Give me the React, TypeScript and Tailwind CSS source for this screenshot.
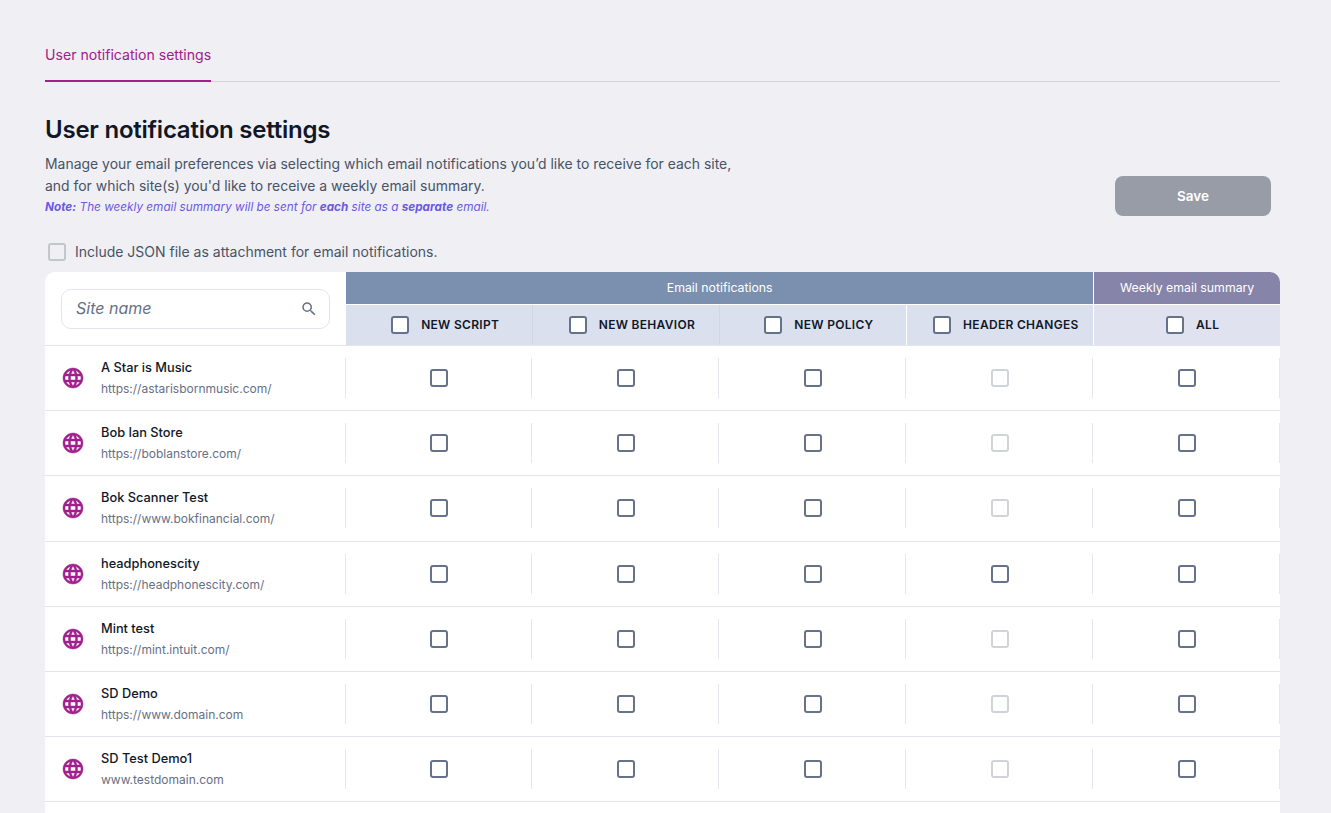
import { MdSearch } from 'react-icons/md';

const sites = [
  { name: 'A Star is Music', url: 'https://astarisbornmusic.com/', header: false },
  { name: 'Bob Ian Store', url: 'https://boblanstore.com/', header: false },
  { name: 'Bok Scanner Test', url: 'https://www.bokfinancial.com/', header: false },
  { name: 'headphonescity', url: 'https://headphonescity.com/', header: true },
  { name: 'Mint test', url: 'https://mint.intuit.com/', header: false },
  { name: 'SD Demo', url: 'https://www.domain.com', header: false },
  { name: 'SD Test Demo1', url: 'www.testdomain.com', header: false },
];

const columns = ['NEW SCRIPT', 'NEW BEHAVIOR', 'NEW POLICY', 'HEADER CHANGES'];

function Globe() {
  return (
    <svg viewBox="0 0 24 24" width="24" height="24" className="shrink-0" fill="#a0208c" stroke="#a0208c" strokeWidth="0.45">
      <path d="M11.99 2C6.47 2 2 6.48 2 12s4.47 10 9.99 10C17.52 22 22 17.52 22 12S17.52 2 11.99 2zm6.93 6h-2.95c-.32-1.25-.78-2.45-1.38-3.56 1.84.63 3.37 1.91 4.33 3.56zM12 4.04c.83 1.2 1.48 2.53 1.91 3.96h-3.82c.43-1.43 1.08-2.76 1.91-3.96zM4.26 14C4.1 13.36 4 12.69 4 12s.1-1.36.26-2h3.38c-.08.66-.14 1.32-.14 2 0 .68.06 1.34.14 2H4.26zm.82 2h2.95c.32 1.25.78 2.45 1.38 3.56-1.84-.63-3.37-1.9-4.33-3.56zm2.95-8H5.08c.96-1.66 2.49-2.93 4.33-3.56C8.81 5.55 8.35 6.75 8.03 8zM12 19.96c-.83-1.2-1.48-2.53-1.91-3.96h3.82c-.43 1.43-1.08 2.76-1.91 3.96zM14.34 14H9.66c-.09-.66-.16-1.32-.16-2 0-.68.07-1.35.16-2h4.68c.09.65.16 1.32.16 2 0 .68-.07 1.34-.16 2zm.25 5.56c.6-1.11 1.06-2.31 1.38-3.56h2.95c-.96 1.65-2.49 2.93-4.33 3.56zM16.36 14c.08-.66.14-1.32.14-2 0-.68-.06-1.34-.14-2h3.38c.16.64.26 1.31.26 2s-.1 1.36-.26 2h-3.38z" />
    </svg>
  );
}

function Box({ disabled }: { disabled?: boolean }) {
  return (
    <input
      type="checkbox"
      disabled={disabled}
      className={`appearance-none block w-[18px] h-[18px] shrink-0 rounded-[3px] border-2 bg-white ${
        disabled ? 'border-[#d0d3d8]' : 'border-[#667289]'
      }`}
    />
  );
}

function Row({ site }: { site: (typeof sites)[number] }) {
  const cells = [false, false, false, !site.header, false];
  return (
    <div className="flex h-[65.15px] items-center border-b border-[#e4e4ec] bg-white">
      <div className="flex w-[300px] items-center pl-[16px]">
        <Globe />
        <div className="ml-[16px]">
          <div className="text-[12.8px] leading-[20px] font-medium text-[#101828]">{site.name}</div>
          <div className="mt-[2px] text-[12px] leading-[18px] text-[#667085]">{site.url}</div>
        </div>
      </div>
      {cells.map((disabled, i) => (
        <div
          key={i}
          className={`flex h-[40px] items-center justify-center border-l border-[#e4e6f0] ${
            i === 0 ? 'w-[186.4px] pl-[1px]' : i === 4 ? 'w-[187.6px] border-r pl-[2px]' : 'w-[187px] pl-[1px]'
          }`}
        >
          <Box disabled={disabled} />
        </div>
      ))}
    </div>
  );
}

export default function App() {
  return (
    <div className="h-screen overflow-hidden bg-[#f0eff4] pt-[43px] pr-[51px] pl-[45px] font-['Inter',sans-serif]">
      <div className="flex h-[39px] border-b border-[#d5d3da]">
        <div className="h-[39px] border-b-2 border-[#a0208c] text-[14.1px] leading-[24px] text-[#a0208c]">
          User notification settings
        </div>
      </div>

      <div className="flex justify-between pt-[32px]">
        <div>
          <h1 className="text-[24px] leading-[32px] font-semibold tracking-[-0.23px] text-[#101828]">
            User notification settings
          </h1>
          <p className="mt-[7px] text-[13.94px] leading-[22px] text-[#475467]">
            Manage your email preferences via selecting which email notifications you’d like to receive for each site,
            <br />
            and for which site(s) you'd like to receive a weekly email summary.
          </p>
          <p className="mt-[2px] text-[11.75px] leading-[16px] text-[#6a5ae0] italic">
            <b>Note:</b> The weekly email summary will be sent for <b>each</b> site as a <b>separate</b> email.
          </p>
        </div>
        <button className="mt-[62px] mr-[9px] h-[40px] w-[156px] rounded-[8px] bg-[#989ca6] text-[13.5px] font-semibold text-white">
          Save
        </button>
      </div>

      <label className="mt-[20px] flex h-[36px] items-center pb-[5px] pl-[3px] text-[14px] text-[#475467]">
        <span className="block h-[18px] w-[18px] rounded-[3px] border-2 border-[#c4c6ce]" />
        <span className="ml-[9px]">Include JSON file as attachment for email notifications.</span>
      </label>

      <div className="overflow-hidden rounded-t-[10px]">
        <div className="flex h-[74.1px] border-b border-[#e4e4ec] bg-white">
          <div className="flex w-[301px] items-center pl-[16px]">
            <div className="flex h-[40px] w-[269px] items-center justify-between rounded-[10px] border border-[#e4e4ec] pr-[11px] pl-[14px]">
              <span className="pb-[2px] text-[16px] text-[#667085] italic">Site name</span>
              <MdSearch className="text-[#667085]" size={18} />
            </div>
          </div>
          <div className="flex flex-1 flex-col">
            <div className="flex h-[32px] text-[12.3px] text-white">
              <div className="flex w-[747.4px] items-center justify-center bg-[#7b90ae]">Email notifications</div>
              <div className="flex flex-1 items-center justify-center border-l border-white bg-[#8784a9]">
                Weekly email summary
              </div>
            </div>
            <div className="mt-px flex flex-1 text-[12px] font-semibold tracking-[0.3px] text-[#101828]">
              {columns.map((c, i) => (
                <div
                  key={c}
                  className={`flex items-center justify-center gap-[12px] bg-[#dbe0ef] ${
                    i === 0 ? 'w-[186.4px] pl-[12px]' : 'w-[187px] border-l border-[#d3d6e2] pl-[11px]'
                  } ${i === 3 ? 'border-white' : ''}`}
                >
                  <Box />
                  <span>{c}</span>
                </div>
              ))}
              <div className="flex flex-1 items-center justify-center gap-[12px] border-l border-white bg-[#e0e2ef] pl-[11px]">
                <Box />
                <span>ALL</span>
              </div>
            </div>
          </div>
        </div>
        {sites.map((s) => (
          <Row key={s.name} site={s} />
        ))}
        <div className="h-[40px] bg-white" />
      </div>
    </div>
  );
}
